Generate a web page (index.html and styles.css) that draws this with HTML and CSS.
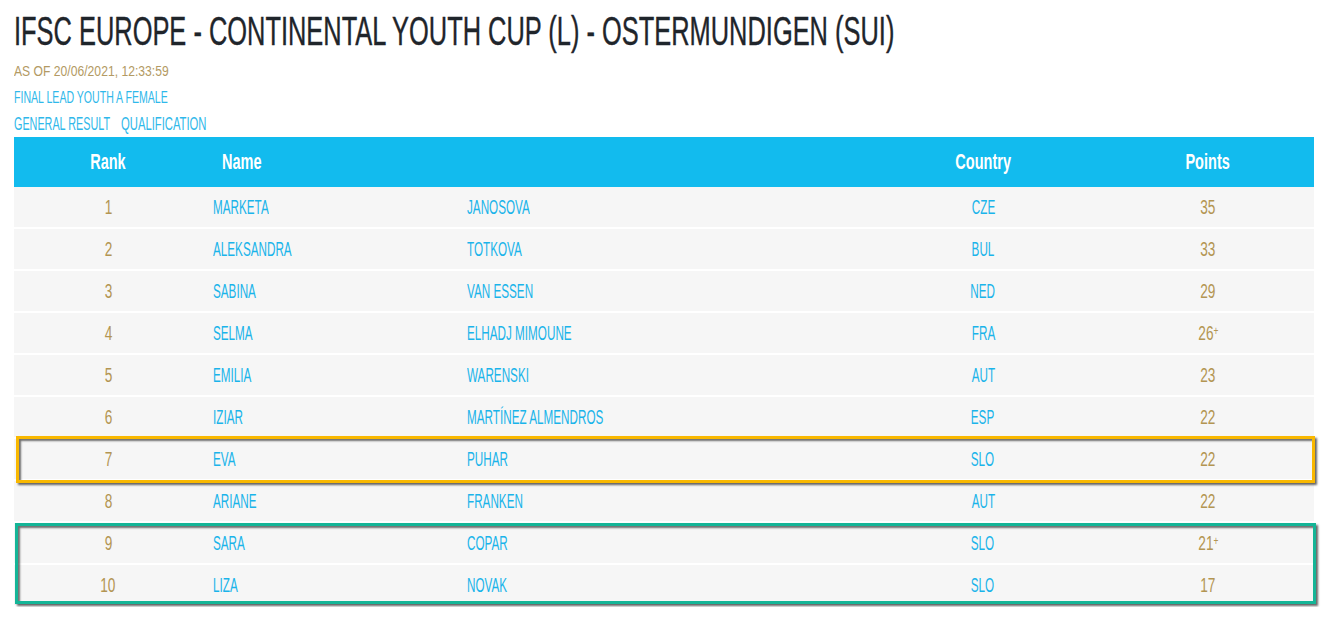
FILE: index.html
```html
<!DOCTYPE html>
<html>
<head>
<meta charset="utf-8">
<link rel="stylesheet" href="styles.css">
</head>
<body>
<div class="page">
  <h1 class="title"><span class="t">IFSC EUROPE - CONTINENTAL YOUTH CUP (L) - OSTERMUNDIGEN (SUI)</span></h1>
  <div class="asof"><span class="t">AS OF 20/06/2021, 12:33:59</span></div>
  <div class="category"><span class="t">FINAL LEAD YOUTH A FEMALE</span></div>
  <nav class="tabs"><a class="tab tab-general"><span class="t">GENERAL RESULT</span></a><a class="tab tab-qual"><span class="t">QUALIFICATION</span></a></nav>
  <div class="results">
    <div class="row head">
      <div class="c rank"><span class="t">Rank</span></div>
      <div class="c first hname"><span class="t">Name</span></div>
      <div class="c last"></div>
      <div class="c country"><span class="t">Country</span></div>
      <div class="c points"><span class="t">Points</span></div>
    </div>
    <div class="row"><div class="c rank"><span class="t">1</span></div><div class="c first"><span class="t">MARKETA</span></div><div class="c last"><span class="t">JANOSOVA</span></div><div class="c country"><span class="t">CZE</span></div><div class="c points"><span class="t">35</span></div></div>
    <div class="row"><div class="c rank"><span class="t">2</span></div><div class="c first"><span class="t">ALEKSANDRA</span></div><div class="c last"><span class="t">TOTKOVA</span></div><div class="c country"><span class="t">BUL</span></div><div class="c points"><span class="t">33</span></div></div>
    <div class="row"><div class="c rank"><span class="t">3</span></div><div class="c first"><span class="t">SABINA</span></div><div class="c last"><span class="t">VAN ESSEN</span></div><div class="c country"><span class="t">NED</span></div><div class="c points"><span class="t">29</span></div></div>
    <div class="row"><div class="c rank"><span class="t">4</span></div><div class="c first"><span class="t">SELMA</span></div><div class="c last"><span class="t">ELHADJ MIMOUNE</span></div><div class="c country"><span class="t">FRA</span></div><div class="c points"><span class="t">26<sup>+</sup></span></div></div>
    <div class="row"><div class="c rank"><span class="t">5</span></div><div class="c first"><span class="t">EMILIA</span></div><div class="c last"><span class="t">WARENSKI</span></div><div class="c country"><span class="t">AUT</span></div><div class="c points"><span class="t">23</span></div></div>
    <div class="row"><div class="c rank"><span class="t">6</span></div><div class="c first"><span class="t">IZIAR</span></div><div class="c last"><span class="t">MARTÍNEZ ALMENDROS</span></div><div class="c country"><span class="t">ESP</span></div><div class="c points"><span class="t">22</span></div></div>
    <div class="row"><div class="c rank"><span class="t">7</span></div><div class="c first"><span class="t">EVA</span></div><div class="c last"><span class="t">PUHAR</span></div><div class="c country"><span class="t">SLO</span></div><div class="c points"><span class="t">22</span></div></div>
    <div class="row"><div class="c rank"><span class="t">8</span></div><div class="c first"><span class="t">ARIANE</span></div><div class="c last"><span class="t">FRANKEN</span></div><div class="c country"><span class="t">AUT</span></div><div class="c points"><span class="t">22</span></div></div>
    <div class="row"><div class="c rank"><span class="t">9</span></div><div class="c first"><span class="t">SARA</span></div><div class="c last"><span class="t">COPAR</span></div><div class="c country"><span class="t">SLO</span></div><div class="c points"><span class="t">21<sup>+</sup></span></div></div>
    <div class="row"><div class="c rank"><span class="t">10</span></div><div class="c first"><span class="t">LIZA</span></div><div class="c last"><span class="t">NOVAK</span></div><div class="c country"><span class="t">SLO</span></div><div class="c points"><span class="t">17</span></div></div>
    <div class="mark mark-yellow"></div>
    <div class="mark mark-green"></div>
  </div>
</div>
</body>
</html>
```

FILE: styles.css
```css
html, body {
  margin: 0;
  padding: 0;
  background: #ffffff;
  overflow: hidden;
}
.page {
  padding: 7px 10px 0 14px;
  font-family: "Liberation Sans", Arial, sans-serif;
  overflow: hidden;
}
.t {
  display: inline-block;
  white-space: nowrap;
  transform-origin: left center;
}
.title {
  margin: 0;
  font-weight: 400;
  font-size: 41px;
  line-height: 48px;
  color: #1f252b;
  white-space: nowrap;
  -webkit-text-stroke: 0.4px #1f252b;
}
.title .t {
  transform: scaleX(0.62);
}
.asof {
  margin-top: 7px;
  font-size: 15px;
  line-height: 18px;
  color: #b39a63;
}
.asof .t {
  transform: scaleX(0.81);
}
.category {
  margin-top: 8px;
  font-size: 16.5px;
  line-height: 18px;
  color: #2fb8ea;
}
.category .t {
  transform: scaleX(0.64);
}
.tabs {
  display: flex;
  margin-top: 8px;
}
.tab {
  font-size: 18px;
  line-height: 20px;
  color: #2fb8ea;
}
.tab-general {
  width: 107px;
}
.tab-general .t {
  transform: scaleX(0.6);
}
.tab-qual .t {
  transform: scaleX(0.625);
}
.results {
  position: relative;
  width: 1300px;
  margin-top: 3px;
}
.row {
  display: grid;
  grid-template-columns: 188px 265px 384px 264px 186px 13px;
  height: 40px;
  align-items: center;
  background: #f6f6f6;
  margin-bottom: 2px;
  font-size: 19.5px;
  color: #1ab4ea;
}
.row .t {
  transform: scaleX(0.6);
}
.row.head {
  height: 50px;
  margin-bottom: 0;
  background: #12bbee;
  color: #ffffff;
  font-weight: 700;
  font-size: 22px;
}
.row.head .t {
  transform: scaleX(0.66);
}
.c.rank, .c.points {
  text-align: center;
  color: #b39552;
}
.c.rank .t, .c.points .t, .c.country .t {
  transform-origin: center center;
}
.row .c.rank .t, .row .c.points .t {
  transform: scaleX(0.7);
}
.row.head .c.rank .t, .row.head .c.points .t {
  transform: scaleX(0.66);
}
.head .c.rank, .head .c.points {
  color: #ffffff;
}
.c.first {
  padding-left: 11px;
}
.c.first.hname {
  padding-left: 20px;
}
.c.country {
  text-align: center;
}
sup {
  font-size: 12px;
  vertical-align: 5px;
  line-height: 0;
}
.mark {
  position: absolute;
  pointer-events: none;
}
.mark-yellow {
  top: 299px;
  left: 2px;
  right: -1px;
  height: 41px;
  border: 3px solid #f9b800;
  box-shadow: 2px 2px 2px rgba(0,0,0,0.6), inset 2px 2px 2px rgba(0,0,0,0.55);
}
.mark-green {
  top: 386px;
  left: 1px;
  right: -2px;
  height: 75px;
  border: 3px solid #14b597;
  box-shadow: 2px 2px 2px rgba(0,0,0,0.6), inset 2px 2px 2px rgba(0,0,0,0.55);
}
```
